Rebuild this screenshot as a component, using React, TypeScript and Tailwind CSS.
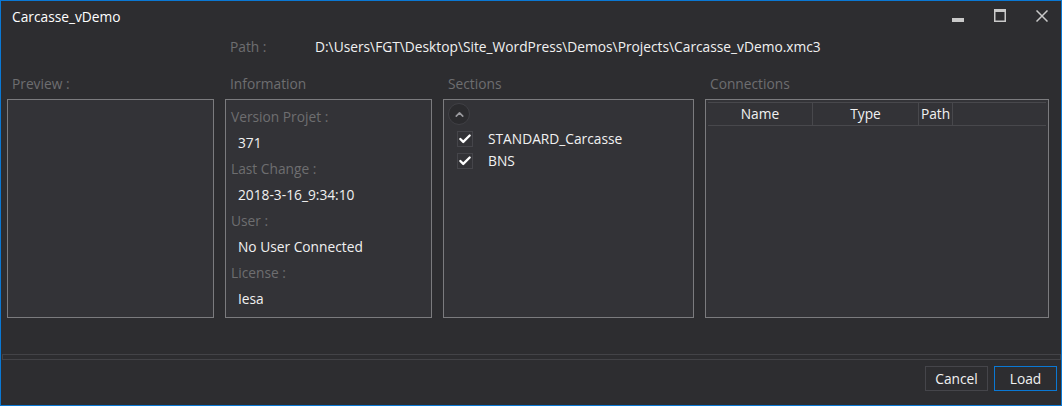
import { Check, ChevronUp } from 'lucide-react';

const font = { fontFamily: '"Open Sans", "Noto Sans", sans-serif' };

function WindowControls() {
  return (
    <div className="ml-auto flex items-start gap-[30px] pr-[13px] pt-[8px] self-stretch">
      {/* minimize */}
      <svg width="12" height="13" viewBox="0 0 12 13" className="block">
        <rect x="0" y="9" width="12" height="4" fill="#c9c9c9" />
      </svg>
      {/* maximize */}
      <svg width="12" height="13" viewBox="0 0 12 13" className="block">
        <rect x="0.75" y="0.75" width="10.5" height="11.5" fill="none" stroke="#c9c9c9" strokeWidth="1.5" />
        <rect x="0" y="0" width="12" height="3" fill="#c9c9c9" />
      </svg>
      {/* close */}
      <svg width="12" height="12" viewBox="0 0 12 12" className="block mt-[1px]">
        <path d="M0.5 0.5 L11.5 11.5 M11.5 0.5 L0.5 11.5" stroke="#c9c9c9" strokeWidth="1.5" />
      </svg>
    </div>
  );
}

function Column({ title, width, children }: { title: string; width: string; children?: React.ReactNode }) {
  return (
    <div className={`flex flex-col ${width}`}>
      <div className="h-[38px] pt-[13px] pl-[5px] leading-[20px] text-[#6e6e70]">{title}</div>
      <div className="h-[219px] border border-[#7b7b7e] bg-[#333337]">{children}</div>
    </div>
  );
}

const infoRows = [
  ['Version Projet :', '371'],
  ['Last Change :', '2018-3-16_9:34:10'],
  ['User :', 'No User Connected'],
  ['License :', 'Iesa'],
];

function CheckRow({ label }: { label: string }) {
  return (
    <div className="h-[22px] flex items-center pl-[13px]">
      <div className="w-[16px] h-[16px] border border-[#45454a] flex items-center justify-center">
        <Check className="w-[14px] h-[14px] text-white" strokeWidth={4} />
      </div>
      <span className="ml-[15px] text-[#f1f1f1]">{label}</span>
    </div>
  );
}

export default function App() {
  return (
    <div
      style={font}
      className="w-[1062px] h-[406px] border border-[#0a78d4] bg-[#2d2d30] flex flex-col text-[13.75px] text-[#f1f1f1] overflow-hidden"
    >
      {/* Title bar */}
      <div className="h-[32px] flex items-center pl-[11px]">
        <span className="text-white">Carcasse_vDemo</span>
        <WindowControls />
      </div>

      {/* Path */}
      <div className="h-[28px] flex items-center pl-[229px]">
        <span className="w-[85px] text-[#6e6e70]">Path :</span>
        <span className="text-[#f1f1f1]">D:\Users\FGT\Desktop\Site_WordPress\Demos\Projects\Carcasse_vDemo.xmc3</span>
      </div>

      {/* Panels */}
      <div className="flex gap-[11px] pl-[6px]">
        <Column title="Preview :" width="w-[207px]" />

        <Column title="Information" width="w-[207px]">
          <div className="pt-[4px]">
            {infoRows.map(([label, value]) => (
              <div key={label}>
                <div className="h-[26px] flex items-center pl-[5px] text-[#6e6e70]">{label}</div>
                <div className="h-[26px] flex items-center pl-[12px] text-[#f1f1f1]">{value}</div>
              </div>
            ))}
          </div>
        </Column>

        <Column title="Sections" width="w-[251px]">
          <div className="pt-[3px] pl-[4px]">
            <div className="w-[22px] h-[22px] rounded-full border border-[#404045] bg-[#2b2b2e] flex items-center justify-center">
              <ChevronUp className="w-[13px] h-[13px] text-[#9a9a9e]" strokeWidth={3} />
            </div>
          </div>
          <div className="pt-[3px]">
            <CheckRow label="STANDARD_Carcasse" />
            <CheckRow label="BNS" />
          </div>
        </Column>

        <Column title="Connections" width="w-[344px]">
          <div className="mt-[2px] ml-[2px] w-[338px] h-[24px] flex border-t border-b border-[#48484c] text-[#f1f1f1]">
            <div className="w-[105px] flex items-center justify-center border-r border-[#48484c]">Name</div>
            <div className="w-[106px] flex items-center justify-center border-r border-[#48484c]">Type</div>
            <div className="w-[34px] flex items-center justify-center border-r border-[#48484c]">Path</div>
            <div className="flex-1" />
          </div>
        </Column>
      </div>

      {/* Separator */}
      <div className="mt-[36px] ml-[1px] h-[6px] border border-[#434347]" />

      {/* Buttons */}
      <div className="mt-[6px] flex justify-end gap-[6px] pr-[4px]">
        <button className="w-[63px] h-[25px] border border-[#45454a] text-[#f1f1f1] leading-none">Cancel</button>
        <button className="w-[63px] h-[25px] border border-[#0a78d4] text-[#f1f1f1] leading-none">Load</button>
      </div>
    </div>
  );
}
